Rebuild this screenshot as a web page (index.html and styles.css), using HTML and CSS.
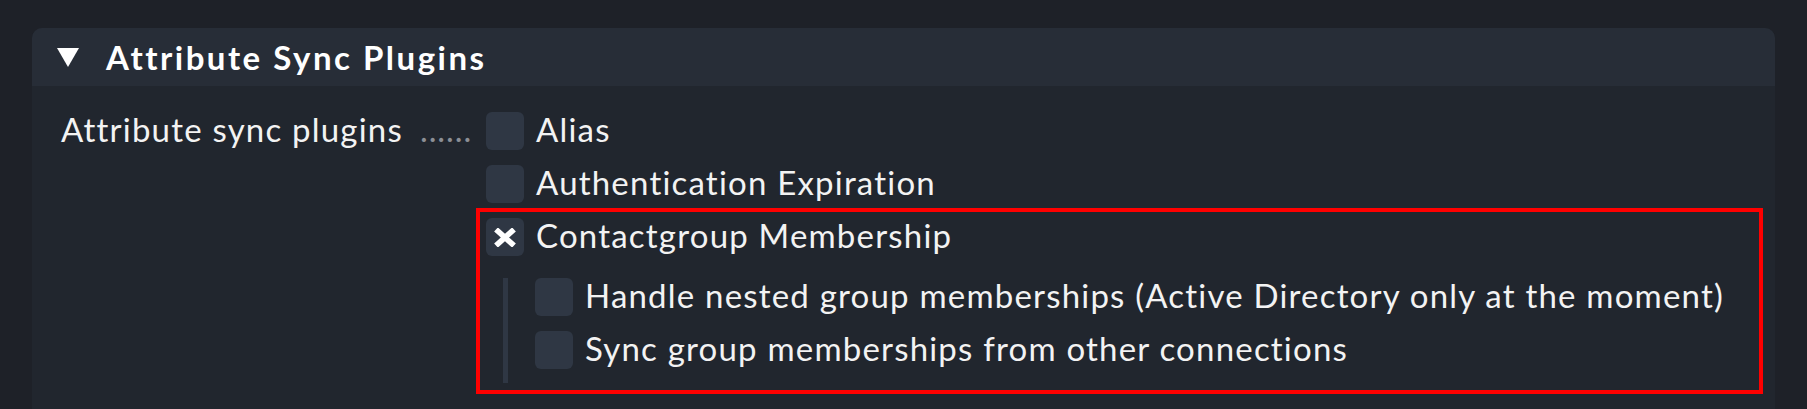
FILE: index.html
```html
<!DOCTYPE html>
<html lang="en">
<head>
<meta charset="utf-8">
<title>Attribute Sync Plugins</title>
<link rel="stylesheet" href="styles.css">
</head>
<body>
<div class="page">
  <section class="panel">
    <header class="panel-header">
      <svg class="toggle" width="22" height="19" viewBox="0 0 22 19" aria-hidden="true"><polygon points="0,0 22,0 11,19" fill="#ffffff"/></svg>
      <h2 class="panel-title">Attribute Sync Plugins</h2>
    </header>
    <div class="panel-body">
      <div class="label-col">
        <span class="label">Attribute sync plugins</span>
        <span class="dots">......</span>
      </div>
      <div class="options">
        <label class="opt"><span class="cb"></span><span class="opt-text">Alias</span></label>
        <label class="opt"><span class="cb"></span><span class="opt-text">Authentication Expiration</span></label>
        <div class="group">
          <label class="opt"><span class="cb checked"><svg width="22" height="19" viewBox="0 0 22 19" aria-hidden="true"><path d="M2 1.5 L20 17.5 M20 1.5 L2 17.5" stroke="#ffffff" stroke-width="5.6" stroke-linecap="butt"/></svg></span><span class="opt-text">Contactgroup Membership</span></label>
          <div class="nested">
            <label class="opt"><span class="cb"></span><span class="opt-text">Handle nested group memberships (Active Directory only at the moment)</span></label>
            <label class="opt"><span class="cb"></span><span class="opt-text">Sync group memberships from other connections</span></label>
          </div>
        </div>
      </div>
    </div>
  </section>
</div>
</body>
</html>
```

FILE: styles.css
```css
html, body {
  margin: 0;
  padding: 0;
}
body {
  background: #1e2128;
  font-family: Lato, "Noto Sans", sans-serif;
  color: #f3f3f3;
  overflow: hidden;
}
.page {
  padding: 28px 32px 0 32px;
}
.panel {
  background: #21262e;
  border-radius: 10px 10px 0 0;
  min-height: 420px;
}
.panel-header {
  height: 58px;
  background: #272d37;
  border-radius: 10px 10px 0 0;
  display: flex;
  align-items: center;
  padding-left: 25px;
  box-sizing: border-box;
}
.toggle {
  display: block;
  margin-top: 1px;
}
.panel-title {
  margin: 0 0 0 27px;
  font-size: 33px;
  font-weight: 700;
  letter-spacing: 2.5px;
  color: #ffffff;
  line-height: 38px;
}
.panel-body {
  display: flex;
  padding: 26px 22px 0 29px;
}
.label-col {
  width: 425px;
  flex: none;
  height: 38px;
  display: flex;
  align-items: center;
  white-space: nowrap;
}
.label {
  font-size: 33px;
  line-height: 38px;
  letter-spacing: 1.2px;
  padding-bottom: 4px;
}
.dots {
  font-size: 33px;
  line-height: 38px;
  color: #8c8f95;
  margin-left: 17px;
  letter-spacing: 0.9px;
  padding-bottom: 4px;
}
.options {
  flex: 1;
  display: flex;
  flex-direction: column;
  gap: 15px;
}
.opt {
  display: flex;
  align-items: center;
  height: 38px;
  gap: 12px;
  white-space: nowrap;
}
.cb {
  width: 38px;
  height: 38px;
  flex: none;
  border-radius: 6px;
  background: #2f3744;
  display: flex;
  align-items: center;
  justify-content: center;
}
.cb svg {
  display: block;
}
.opt-text {
  font-size: 33px;
  line-height: 38px;
  letter-spacing: 1.2px;
  padding-bottom: 4px;
}
.group {
  position: relative;
  margin-top: 0;
}
.group::after {
  content: "";
  position: absolute;
  top: -10px;
  left: -10px;
  right: -10px;
  bottom: -11px;
  border: 4px solid #ff0000;
  pointer-events: none;
}
.nested {
  margin: 22px 0 0 17px;
  border-left: 5px solid #2f3744;
  padding: 0 0 14px 27px;
  display: flex;
  flex-direction: column;
  gap: 15px;
}
```
